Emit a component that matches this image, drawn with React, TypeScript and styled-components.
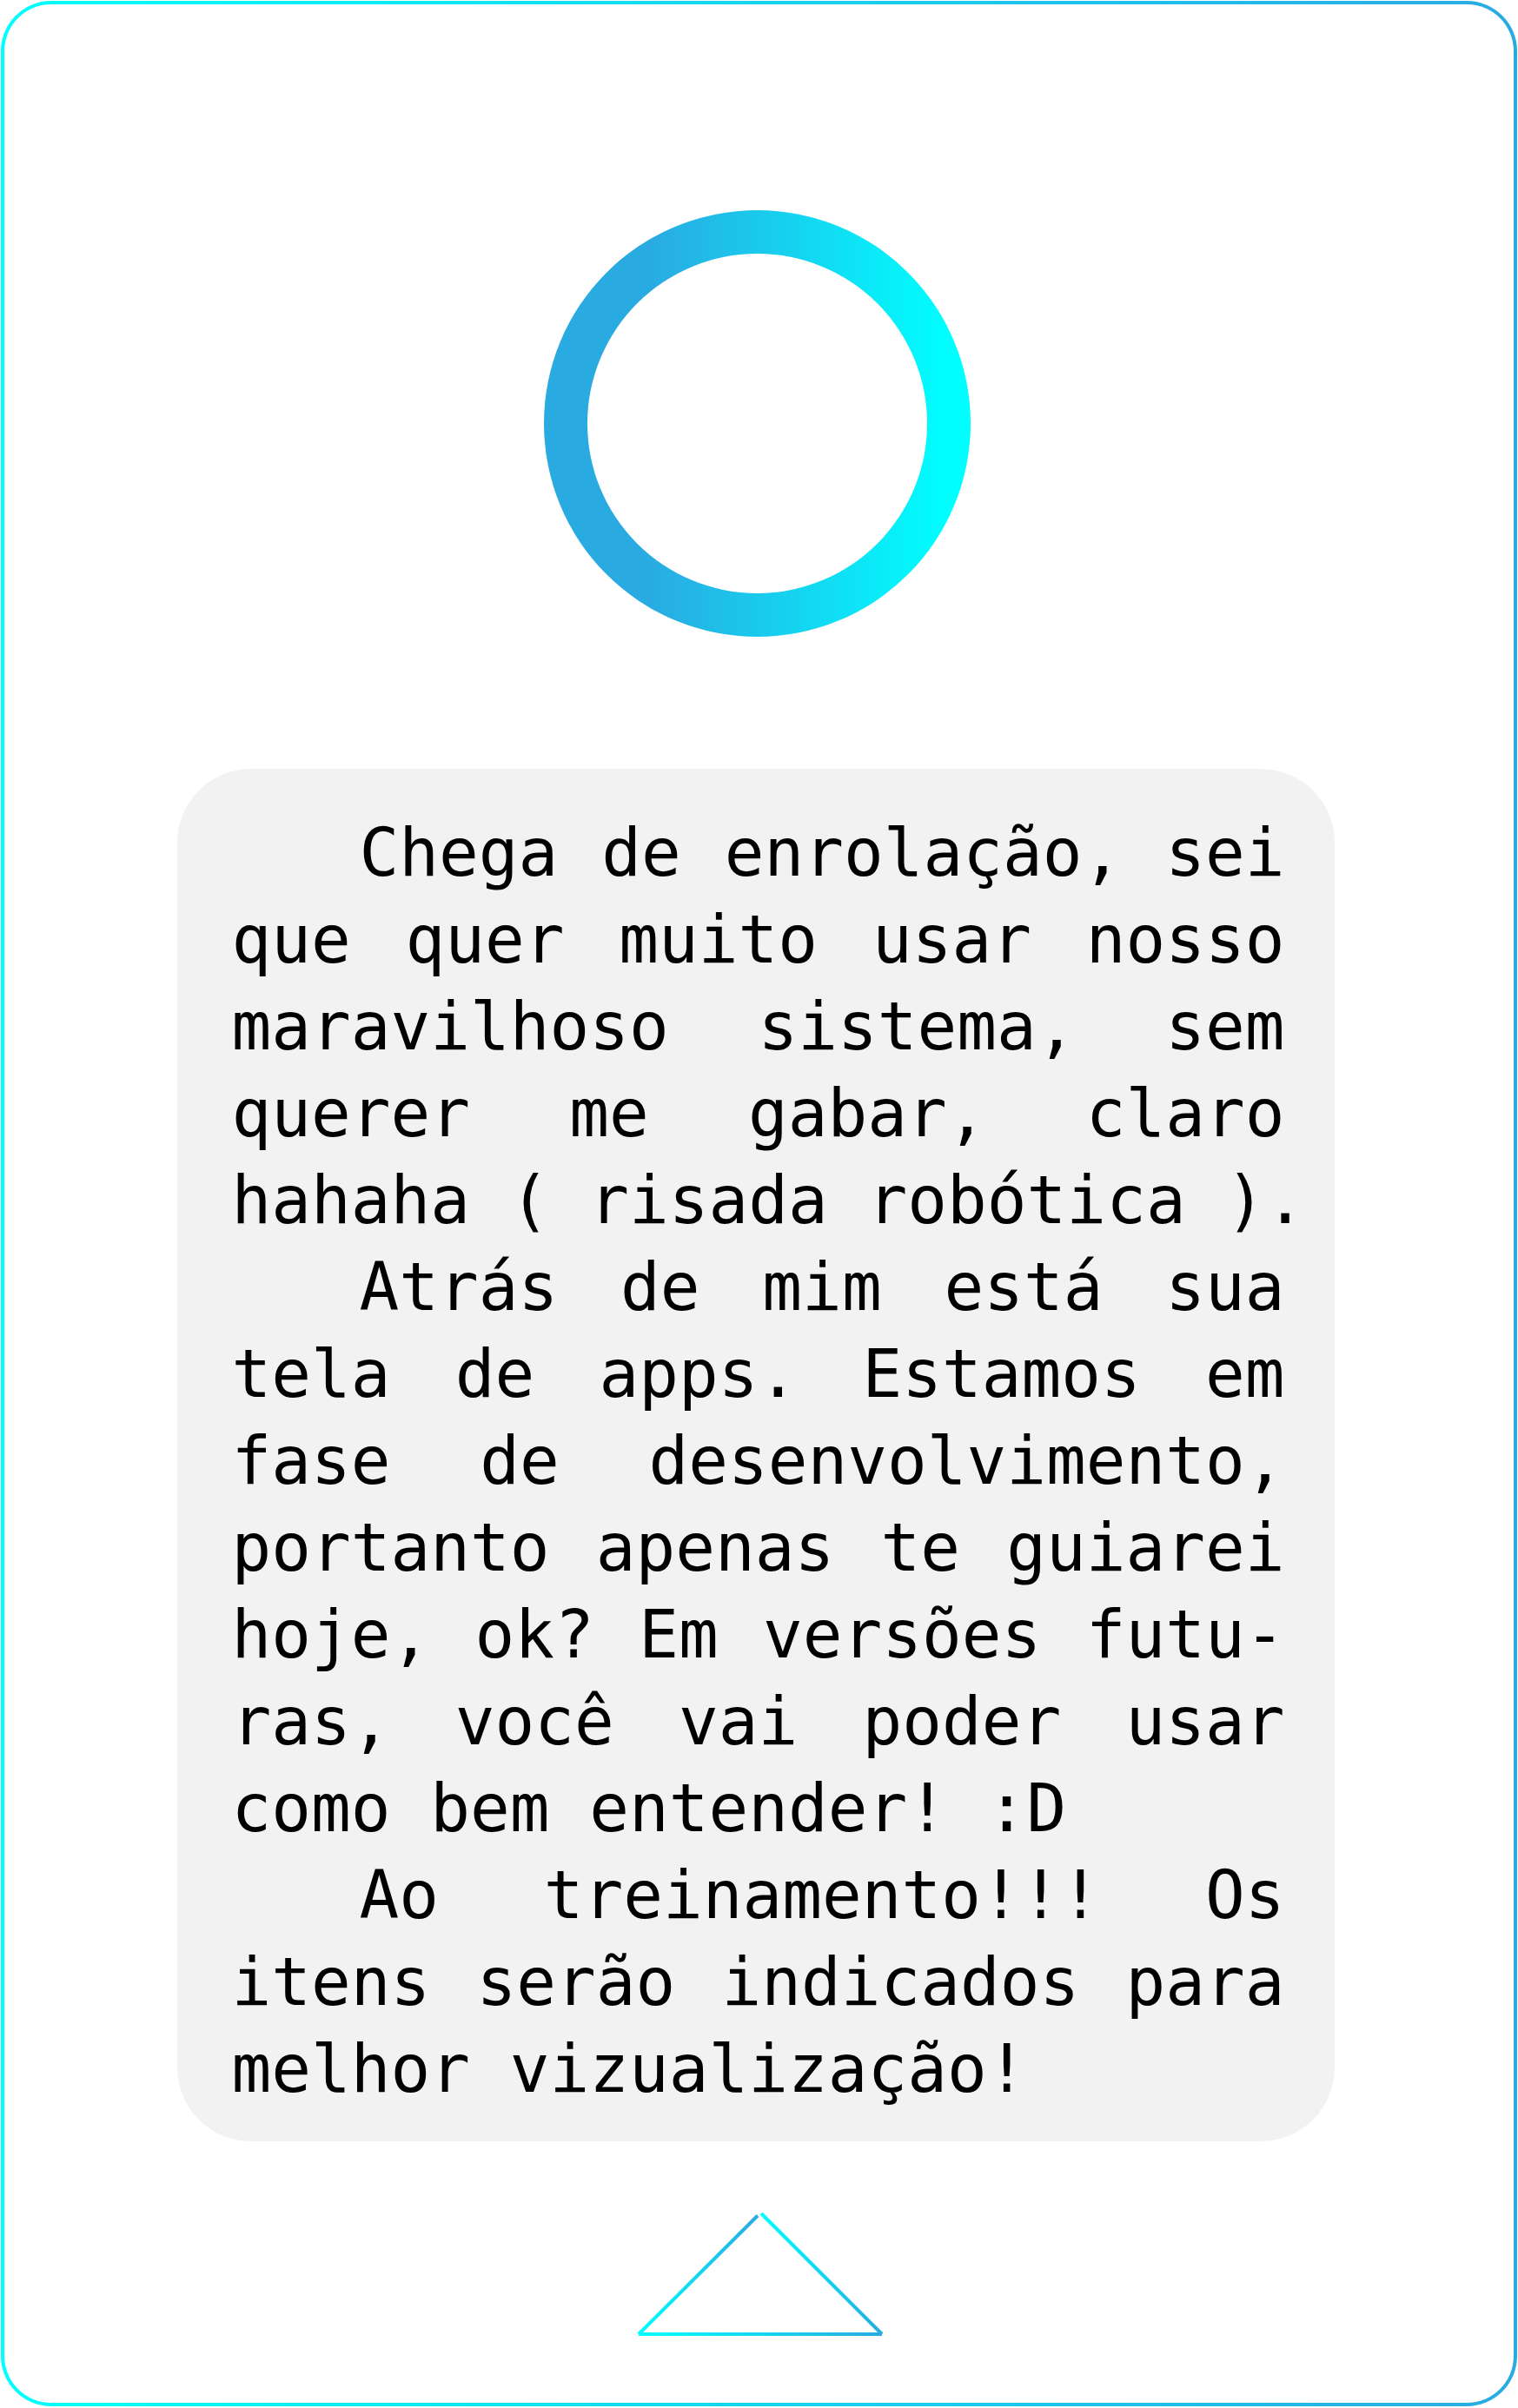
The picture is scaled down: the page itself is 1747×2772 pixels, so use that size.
import React from "react";
import styled, { createGlobalStyle } from "styled-components";

const GlobalStyle = createGlobalStyle`
  html, body {
    margin: 0;
    padding: 0;
    background: #ffffff;
  }
`;

const Frame = styled.div`
  box-sizing: border-box;
  margin: 1px;
  width: 1745px;
  height: 2769px;
  border: 4px solid transparent;
  border-radius: 58px;
  background:
    linear-gradient(#ffffff, #ffffff) padding-box,
    linear-gradient(to right, #00ffff, #29abe2) border-box;
  display: flex;
  flex-direction: column;
  align-items: center;
  padding-top: 237px;
`;

const Ring = styled.div`
  flex-shrink: 0;
  width: 491px;
  height: 491px;
  margin-right: 5px;
  border-radius: 50%;
  background: linear-gradient(to right, #29abe2 25%, #00ffff 95%);
  display: flex;
  align-items: center;
  justify-content: center;
`;

const RingHole = styled.div`
  width: 391px;
  height: 391px;
  border-radius: 50%;
  background: #ffffff;
`;

const Bubble = styled.div`
  box-sizing: border-box;
  flex-shrink: 0;
  width: 1332px;
  margin-top: 152px;
  margin-right: 8px;
  padding: 47px 57px 33px 63px;
  background: #f2f2f2;
  border-radius: 85px;
`;

const Paragraph = styled.p`
  margin: 0;
  font-family: "DejaVu Sans Mono", "Liberation Mono", monospace;
  font-size: 76px;
  line-height: 100px;
  color: #000000;
  text-align: justify;
  text-indent: 147px;
`;

const NoBreak = styled.span`
  white-space: nowrap;
`;

const Arrow = styled.svg`
  flex-shrink: 0;
  margin-top: 81px;
  margin-left: 3px;
  display: block;
`;

export default function App() {
  return (
    <>
      <GlobalStyle />
      <Frame>
        <Ring>
          <RingHole />
        </Ring>
        <Bubble>
          <Paragraph>
            Chega de enrolação, sei que quer muito usar nosso maravilhoso
            sistema, sem querer me gabar, claro{" "}
            <NoBreak>hahaha ( risada robótica ).</NoBreak>
          </Paragraph>
          <Paragraph>
            Atrás de mim está sua tela de apps. Estamos em fase de
            desenvolvimento, portanto apenas te guiarei hoje, ok? Em versões
            futu{"\u00AD"}ras, você vai poder usar como bem entender! :D
          </Paragraph>
          <Paragraph>
            Ao treinamento!!! Os itens serão indicados para melhor
            vizualização!
          </Paragraph>
        </Bubble>
        <Arrow width="284" height="145" viewBox="0 0 284 145">
          <defs>
            <linearGradient id="triLeft" gradientUnits="userSpaceOnUse" x1="2" y1="141" x2="139" y2="4">
              <stop offset="0" stopColor="#00ffff" />
              <stop offset="1" stopColor="#29abe2" />
            </linearGradient>
            <linearGradient id="triRight" gradientUnits="userSpaceOnUse" x1="143" y1="2" x2="282" y2="141">
              <stop offset="0" stopColor="#00ffff" />
              <stop offset="1" stopColor="#29abe2" />
            </linearGradient>
            <linearGradient id="triBase" gradientUnits="userSpaceOnUse" x1="2" y1="141" x2="282" y2="141">
              <stop offset="0" stopColor="#00ffff" />
              <stop offset="1" stopColor="#29abe2" />
            </linearGradient>
          </defs>
          <line x1="2" y1="141" x2="139" y2="4.5" stroke="url(#triLeft)" strokeWidth="4" />
          <line x1="143" y1="2" x2="282" y2="141" stroke="url(#triRight)" strokeWidth="4" />
          <line x1="2" y1="141" x2="282" y2="141" stroke="url(#triBase)" strokeWidth="4" />
        </Arrow>
      </Frame>
    </>
  );
}
